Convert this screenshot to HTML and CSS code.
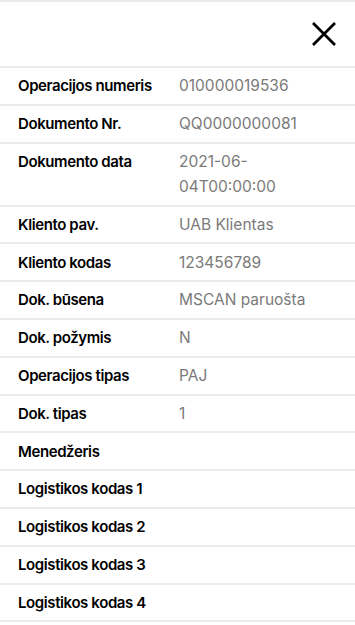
FILE: index.html
```html
<!DOCTYPE html>
<html>
<head>
    <title>Dokumento informacija</title>
    <link rel="stylesheet" href="styles.css">
</head>
<body>
    <div id="header">
        <button class="close-button" aria-label="Uždaryti">
            <svg width="26" height="26" viewBox="0 0 26 26">
                <path d="M2 2 L24 24 M24 2 L2 24" stroke="#000" stroke-width="2.8" fill="none"/>
            </svg>
        </button>
    </div>
    <!-- Dokumento laukai -->
    <div id="details">
        <div class="row"><div class="label">Operacijos numeris</div><div class="value">010000019536</div></div>
        <div class="row"><div class="label">Dokumento Nr.</div><div class="value">QQ0000000081</div></div>
        <div class="row"><div class="label">Dokumento data</div><div class="value">2021-06-04T00:00:00</div></div>
        <div class="row"><div class="label">Kliento pav.</div><div class="value">UAB Klientas</div></div>
        <div class="row"><div class="label">Kliento kodas</div><div class="value">123456789</div></div>
        <div class="row"><div class="label">Dok. būsena</div><div class="value">MSCAN paruošta</div></div>
        <div class="row"><div class="label">Dok. požymis</div><div class="value">N</div></div>
        <div class="row"><div class="label">Operacijos tipas</div><div class="value">PAJ</div></div>
        <div class="row"><div class="label">Dok. tipas</div><div class="value">1</div></div>
        <div class="row"><div class="label">Menedžeris</div><div class="value"></div></div>
        <div class="row"><div class="label">Logistikos kodas 1</div><div class="value"></div></div>
        <div class="row"><div class="label">Logistikos kodas 2</div><div class="value"></div></div>
        <div class="row"><div class="label">Logistikos kodas 3</div><div class="value"></div></div>
        <div class="row"><div class="label">Logistikos kodas 4</div><div class="value"></div></div>
    </div>
</body>
</html>
```

FILE: styles.css
```css
body {
    font-family: Inter, "Noto Sans", sans-serif;
    margin: 0;
    padding: 0;
    background-color: #fff;
    color: #000;
}

#header {
    display: flex;
    justify-content: flex-end;
    align-items: center;
    height: 64px;
    border-top: 2px solid #ebebeb;
    border-bottom: 2px solid #ebebeb;
    padding-right: 18px;
}

.close-button {
    background: none;
    border: none;
    padding: 0;
    width: 26px;
    height: 26px;
    cursor: pointer;
}

.row {
    display: grid;
    grid-template-columns: 161px 1fr;
    padding: 5.3px 18px;
    border-bottom: 2px solid #ebebeb;
    line-height: 25.2px;
    min-height: 25.2px;
}

.label {
    font-size: 15px;
    font-weight: 600;
    letter-spacing: -0.4px;
}

.value {
    font-size: 15.5px;
    color: #7a7a7a;
    padding-right: 30px;
}
```
